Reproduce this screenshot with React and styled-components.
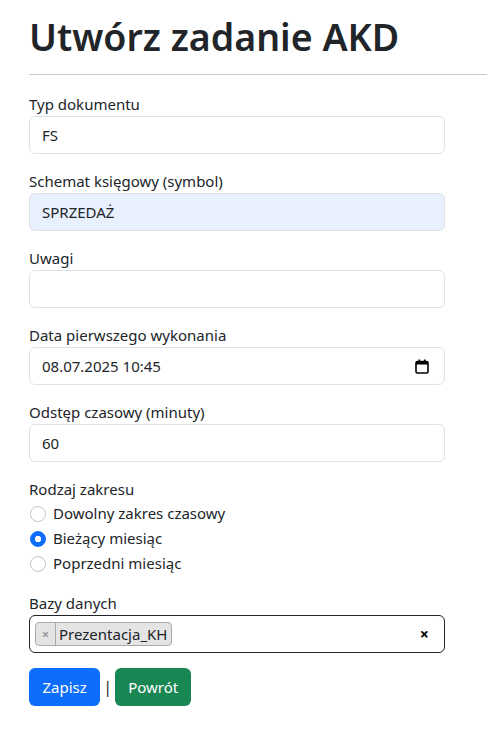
import styled, { createGlobalStyle } from 'styled-components';

const GlobalStyle = createGlobalStyle`
  html, body {
    margin: 0;
    padding: 0;
    background: #fff;
  }
  body {
    font-family: "Noto Sans", "Open Sans", "Liberation Sans", sans-serif;
    font-size: 15px;
    line-height: 1.5;
    color: #212529;
  }
`;

const Page = styled.div`
  padding: 14px 0 20px 29px;
`;

const Title = styled.h1`
  margin: 0;
  font-size: 37.5px;
  font-weight: 600;
  line-height: 1.2;
`;

const Rule = styled.hr`
  margin: 15px 0 17px;
  border: 0;
  border-top: 1px solid #c8c9ca;
`;

const Form = styled.form`
  width: 416px;
`;

const Group = styled.div`
  margin-bottom: 15px;
`;

const Label = styled.label`
  display: block;
  line-height: 24px;
  font-size: 15px;
`;

const Field = styled.div`
  display: flex;
  align-items: center;
  box-sizing: border-box;
  height: 38px;
  padding: 0 12px;
  border: 1px solid ${(p) => (p.$dark ? '#212529' : '#dee2e6')};
  border-radius: 6px;
  background: ${(p) => (p.$filled ? '#e8f0fe' : '#fff')};
  font-size: 15px;
`;

const Value = styled.span`
  flex: 1;
`;

const CalendarIcon = () => (
  <svg width="14" height="15" viewBox="0 0 14 15" style={{ marginRight: 3 }}>
    <rect x="1" y="2.5" width="12" height="11.5" rx="1.5" fill="none" stroke="#000" strokeWidth="1.6" />
    <rect x="1" y="2.5" width="12" height="3" fill="#000" />
    <rect x="3.5" y="0.5" width="1.6" height="3" fill="#000" />
    <rect x="8.9" y="0.5" width="1.6" height="3" fill="#000" />
  </svg>
);

const RadioRow = styled.div`
  display: flex;
  align-items: center;
  gap: 7px;
  height: 25px;
  padding-left: 1px;
`;

const RadioDot = styled.span`
  box-sizing: border-box;
  width: 16px;
  height: 16px;
  border-radius: 50%;
  border: 1px solid ${(p) => (p.$on ? '#0d6efd' : '#c3c5c8')};
  background: ${(p) => (p.$on ? 'radial-gradient(circle, #fff 0 3px, #0d6efd 3.5px)' : '#fff')};
`;

const RangeGroup = styled.div`
  margin-bottom: 15px;
`;

const Tag = styled.span`
  display: inline-flex;
  align-items: center;
  height: 24px;
  box-sizing: border-box;
  border: 1px solid #aaa;
  border-radius: 4px;
  background: #e4e4e4;
  margin-left: -7px;
`;

const TagRemove = styled.span`
  display: flex;
  align-items: center;
  justify-content: center;
  width: 19px;
  height: 100%;
  border-right: 1px solid #aaa;
  color: #999;
  font-size: 13px;
  font-weight: 700;
`;

const TagText = styled.span`
  padding: 0 4px 0 3px;
  font-size: 15px;
`;

const ClearBtn = styled.span`
  font-size: 16px;
  font-weight: 700;
  color: #000;
  margin-right: 3px;
`;

const Actions = styled.div`
  display: flex;
  align-items: center;
  gap: 3px;
  margin-top: 15px;
`;

const Button = styled.button`
  height: 38px;
  padding: 0 ${(p) => (p.$variant === 'success' ? '13px' : '13.5px')};
  border: 0;
  border-radius: 6px;
  font-family: inherit;
  font-size: 15px;
  color: #fff;
  background: ${(p) => (p.$variant === 'success' ? '#198754' : '#0d6efd')};
`;

const Sep = styled.span`
  font-size: 16px;
`;

const fields = [
  { label: 'Typ dokumentu', value: 'FS' },
  { label: 'Schemat księgowy (symbol)', value: 'SPRZEDAŻ', filled: true },
  { label: 'Uwagi', value: '' },
  { label: 'Data pierwszego wykonania', value: '08.07.2025 10:45', date: true },
  { label: 'Odstęp czasowy (minuty)', value: '60' },
];

const ranges = ['Dowolny zakres czasowy', 'Bieżący miesiąc', 'Poprzedni miesiąc'];

export default function App() {
  return (
    <Page>
      <GlobalStyle />
      <Title>Utwórz zadanie AKD</Title>
      <Rule />
      <Form>
        {fields.map((f) => (
          <Group key={f.label}>
            <Label>{f.label}</Label>
            <Field $filled={f.filled}>
              <Value>{f.value}</Value>
              {f.date && <CalendarIcon />}
            </Field>
          </Group>
        ))}
        <RangeGroup>
          <Label>Rodzaj zakresu</Label>
          {ranges.map((r, i) => (
            <RadioRow key={r}>
              <RadioDot $on={i === 1} />
              <span>{r}</span>
            </RadioRow>
          ))}
        </RangeGroup>
        <Label>Bazy danych</Label>
        <Field $dark>
          <Value>
            <Tag>
              <TagRemove>×</TagRemove>
              <TagText>Prezentacja_KH</TagText>
            </Tag>
          </Value>
          <ClearBtn>×</ClearBtn>
        </Field>
        <Actions>
          <Button type="button">Zapisz</Button>
          <Sep>|</Sep>
          <Button type="button" $variant="success">Powrót</Button>
        </Actions>
      </Form>
    </Page>
  );
}
